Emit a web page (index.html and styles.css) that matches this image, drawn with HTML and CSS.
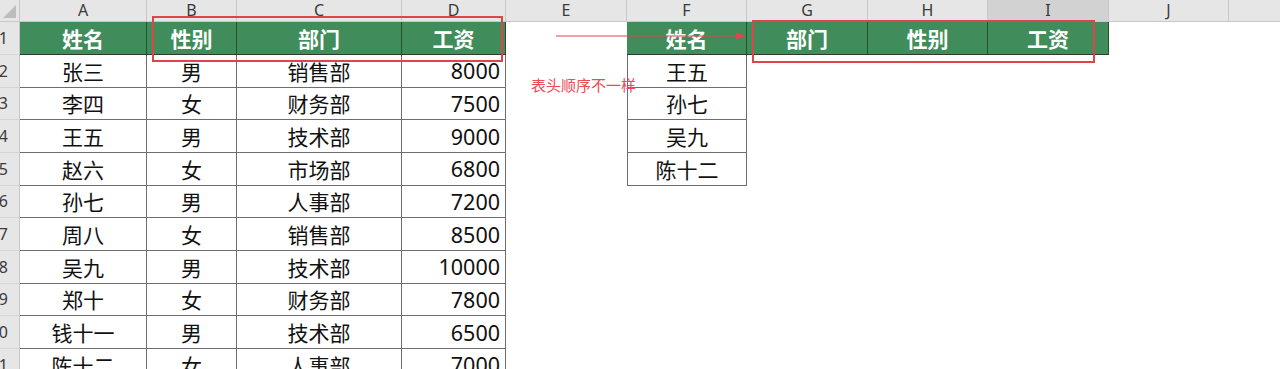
FILE: index.html
```html
<!DOCTYPE html>
<html lang="zh-CN">
<head>
<meta charset="utf-8">
<title>Sheet</title>
<link rel="stylesheet" href="styles.css">
</head>
<body>
<div class="sheet">
  <div class="colheads">
    <div class="corner"><span class="tri"></span></div>
    <div class="ch wa">A</div>
    <div class="ch wb">B</div>
    <div class="ch wc">C</div>
    <div class="ch wd">D</div>
    <div class="ch we">E</div>
    <div class="ch wf">F</div>
    <div class="ch wg">G</div>
    <div class="ch wh">H</div>
    <div class="ch wi sel">I</div>
    <div class="ch wj">J</div>
    <div class="ch wk"></div>
  </div>
  <div class="body">
    <div class="rowheads">
      <div class="rh first">1</div>
      <div class="rh">2</div>
      <div class="rh">3</div>
      <div class="rh">4</div>
      <div class="rh">5</div>
      <div class="rh">6</div>
      <div class="rh">7</div>
      <div class="rh">8</div>
      <div class="rh">9</div>
      <div class="rh">10</div>
      <div class="rh">11</div>
    </div>
    <div class="tbl1">
      <div class="hd">姓名</div><div class="hd">性别</div><div class="hd">部门</div><div class="hd">工资</div>
      <div class="c">张三</div><div class="c">男</div><div class="c">销售部</div><div class="c num">8000</div>
      <div class="c">李四</div><div class="c">女</div><div class="c">财务部</div><div class="c num">7500</div>
      <div class="c">王五</div><div class="c">男</div><div class="c">技术部</div><div class="c num">9000</div>
      <div class="c">赵六</div><div class="c">女</div><div class="c">市场部</div><div class="c num">6800</div>
      <div class="c">孙七</div><div class="c">男</div><div class="c">人事部</div><div class="c num">7200</div>
      <div class="c">周八</div><div class="c">女</div><div class="c">销售部</div><div class="c num">8500</div>
      <div class="c">吴九</div><div class="c">男</div><div class="c">技术部</div><div class="c num">10000</div>
      <div class="c">郑十</div><div class="c">女</div><div class="c">财务部</div><div class="c num">7800</div>
      <div class="c">钱十一</div><div class="c">男</div><div class="c">技术部</div><div class="c num">6500</div>
      <div class="c">陈十二</div><div class="c">女</div><div class="c">人事部</div><div class="c num">7000</div>
    </div>
    <div class="gap-e"></div>
    <div class="tbl2">
      <div class="hdrow">
        <div class="hd wf">姓名</div>
        <div class="hd wg">部门</div>
        <div class="hd wh">性别</div>
        <div class="hd wi">工资</div>
      </div>
      <div class="fc">王五</div>
      <div class="fc">孙七</div>
      <div class="fc">吴九</div>
      <div class="fc">陈十二</div>
    </div>
  </div>

  <div class="box box1"></div>
  <div class="box box2"></div>
  <svg class="arrow" width="192" height="10" viewBox="0 0 192 10">
    <line x1="0" y1="5" x2="182" y2="5" stroke="#e4454c" stroke-width="1.2"/>
    <polygon points="180,1.5 190,5 180,8.5" fill="#e4454c"/>
  </svg>
  <div class="note">表头顺序不一样</div>
</div>
</body>
</html>
```
FILE: styles.css
```css
* { box-sizing: border-box; margin: 0; padding: 0; }
html, body { width: 1280px; height: 369px; overflow: hidden; background: #fff; }
body {
  font-family: "Noto Sans CJK SC", "Noto Sans", sans-serif;
  color: #111;
}
.sheet { position: relative; width: 1280px; height: 369px; overflow: hidden; }

/* column header */
.colheads {
  display: flex;
  height: 22px;
  background: #e6e6e6;
  border-bottom: 1px solid #c8c8c8;
}
.corner {
  width: 20px; height: 21px;
  position: relative;
  border-right: 1px solid #c8c8c8;
  background: #e6e6e6;
}
.tri {
  position: absolute; right: 3px; bottom: 3px;
  width: 0; height: 0;
  border-left: 13px solid transparent;
  border-bottom: 13px solid #bdbdbd;
}
.ch {
  height: 21px;
  border-right: 1px solid #c8c8c8;
  font-family: "Noto Sans", "DejaVu Sans", sans-serif;
  font-size: 16px;
  line-height: 21px;
  color: #3a3a3a;
  text-align: center;
}
.ch.sel { background: #d2d2d2; color: #3a3a3a; }
.wa { width: 127px; }
.wb { width: 90px; }
.wc { width: 165px; }
.wd { width: 104px; }
.we { width: 121px; }
.wf { width: 120px; }
.wg { width: 121px; }
.wh { width: 120px; }
.wi { width: 121px; }
.wj { width: 120px; }
.wk { flex: 1; border-right: none; }

/* body */
.body { display: flex; align-items: flex-start; }
.rowheads {
  width: 20px;
  display: flex; flex-direction: column;
  background: #e6e6e6;
  border-right: 1px solid #c8c8c8;
  overflow: hidden;
}
.rh {
  height: 32.67px;
  border-bottom: 1px solid #d6d6d6;
  font-family: "Noto Sans", "DejaVu Sans", sans-serif;
  font-size: 16px;
  color: #3a3a3a;
  display: flex; align-items: center; justify-content: flex-end;
  padding-right: 11px;
  white-space: nowrap;
}
.rh.first { height: 33px; }

.tbl1 {
  display: grid;
  grid-template-columns: 127px 90px 165px 104px;
  grid-template-rows: 33px;
  grid-auto-rows: 32.67px;
}
.hd {
  background: #408d5b;
  color: #fff;
  font-weight: 700;
  font-size: 21px;
  display: flex; align-items: center; justify-content: center;
  border-right: 1px solid #26502f;
  border-bottom: 1px solid #2f3a32;
  height: 33px;
}
.c {
  font-size: 21px;
  display: flex; align-items: center; justify-content: center;
  border-right: 1px solid #6e6e6e;
  border-bottom: 1px solid #6e6e6e;
  white-space: nowrap;
}
.c.num {
  justify-content: flex-end;
  padding-right: 5px;
  font-family: "Noto Sans", "DejaVu Sans", sans-serif;
  font-size: 21.5px;
}

.gap-e { width: 121px; flex: none; }

.tbl2 { display: flex; flex-direction: column; }
.hdrow { display: flex; }
.fc {
  width: 120px;
  height: 32.67px;
  font-size: 21px;
  display: flex; align-items: center; justify-content: center;
  border-left: 1px solid #6e6e6e;
  border-right: 1px solid #6e6e6e;
  border-bottom: 1px solid #6e6e6e;
}

/* overlays */
.box {
  position: absolute;
  border: 2px solid #e0444b;
}
.box1 { left: 152px; top: 16px; width: 351px; height: 46px; }
.box2 { left: 752px; top: 20px; width: 343px; height: 43px; }
.arrow { position: absolute; left: 556px; top: 31px; }
.note {
  position: absolute;
  left: 531px; top: 76px;
  font-size: 15px;
  line-height: 17px;
  color: #ee4a54;
  white-space: nowrap;
}
```
